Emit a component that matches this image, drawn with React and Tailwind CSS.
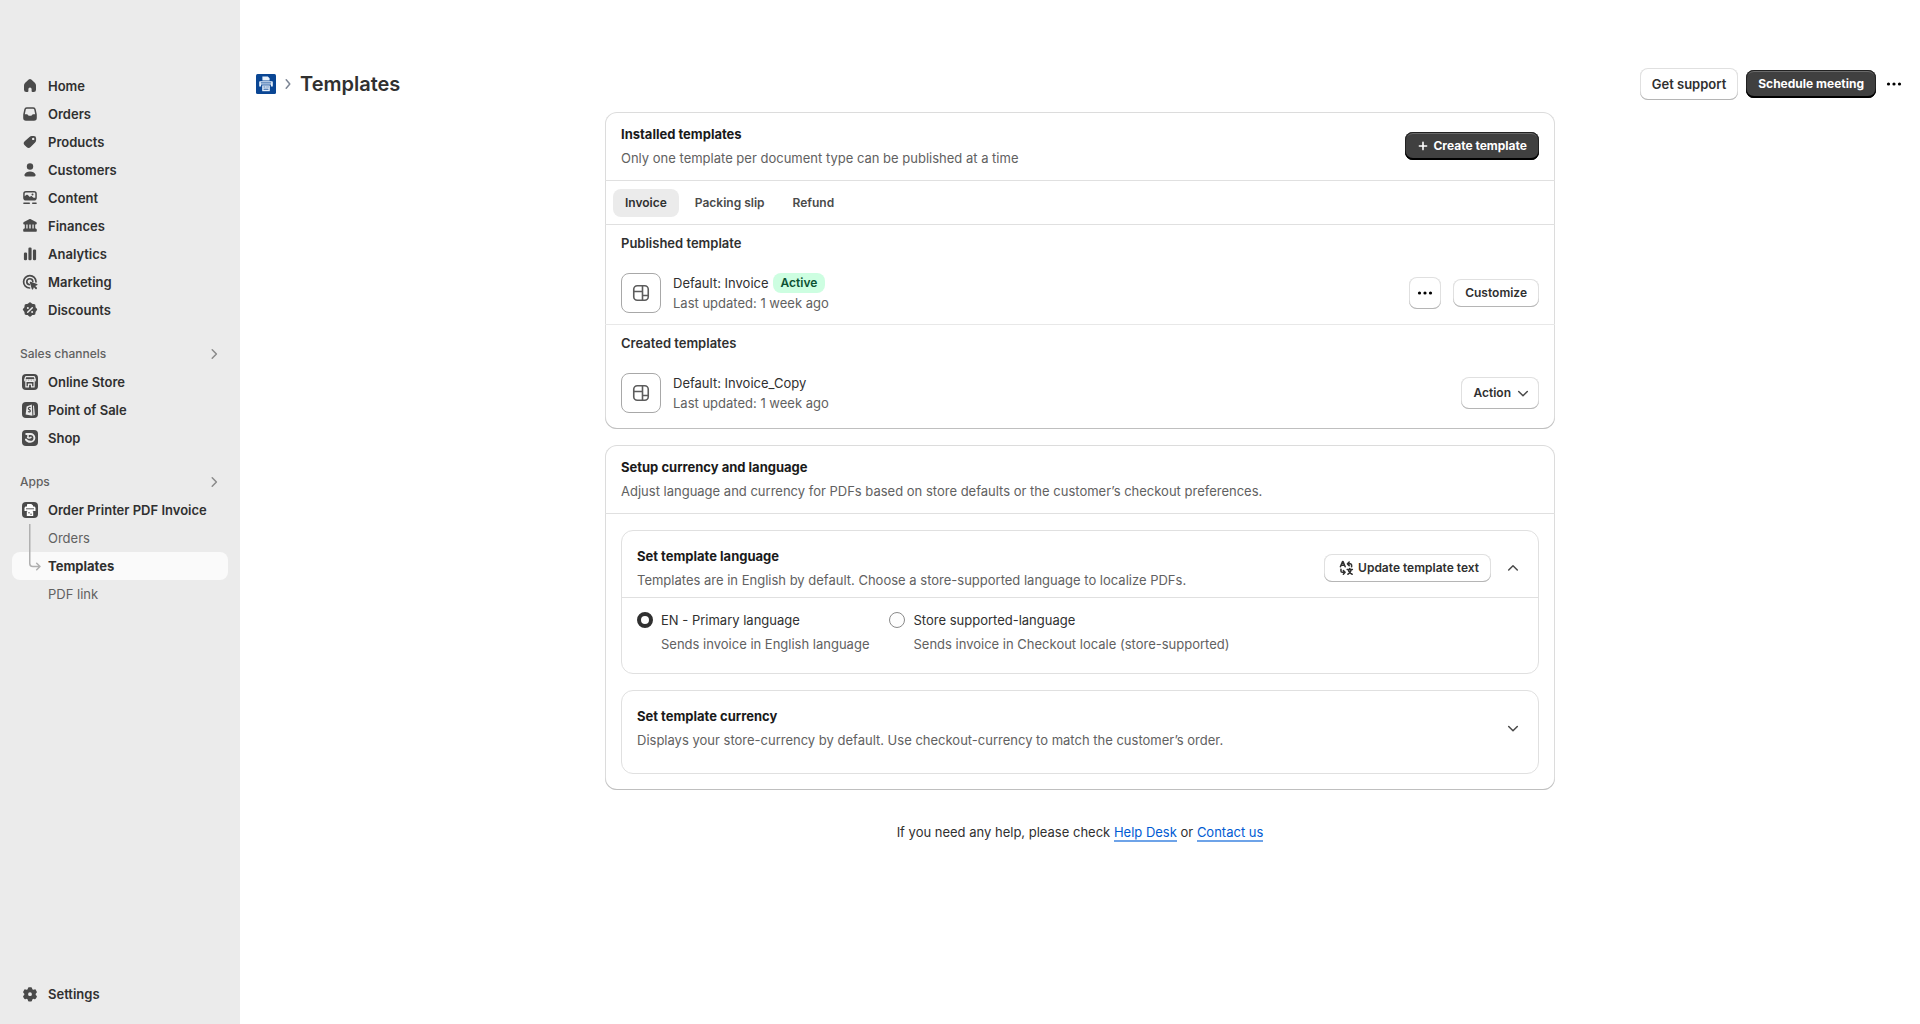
import { useState } from "react";
import clsx from "clsx";

function Icon({ children, className = "size-5" }) {
  return (
    <svg viewBox="0 0 20 20" className={clsx("shrink-0", className)} fill="currentColor" aria-hidden="true">
      {children}
    </svg>
  );
}

const HomeIcon = () => (
  <Icon>
    <path d="M8.7 3.6a2 2 0 0 1 2.6 0l3.5 3.2A3.6 3.6 0 0 1 16 9.500v4.200A2.300 2.300 0 0 1 13.700 16H12.500a.9.9 0 0 1-.9-.9v-2a1.600 1.600 0 0 0-3.200 0v2a.9.9 0 0 1-.9.9H6.300A2.300 2.300 0 0 1 4 13.700V9.500c0-1 .4-2 1.200-2.700Z" />
  </Icon>
);

const OrdersIcon = () => (
  <Icon>
    <path
      fillRule="evenodd"
      d="M6.700 3.200h6.600a2.500 2.500 0 0 1 2.400 2l1 4.800c.1.3.1.5.1.800v3.200a2.800 2.800 0 0 1-2.800 2.800H6a2.800 2.800 0 0 1-2.800-2.800v-3.200c0-.3 0-.5.1-.8l1-4.800a2.500 2.500 0 0 1 2.400-2Zm.2 1.500c-.6 0-1 .3-1.100.8L4.800 10.200h1.900c.5 0 .9.2 1.200.6l.5.700c.1.200.3.300.5.300h2.200c.2 0 .4-.1.500-.3l.5-.7c.3-.4.7-.6 1.200-.6h1.900l-1-4.700c-.1-.5-.5-.8-1.100-.8Z"
    />
  </Icon>
);

const ProductsIcon = () => (
  <Icon>
    <path
      fillRule="evenodd"
      d="M11.800 4h2A2.300 2.300 0 0 1 16.100 6.300v2c0 .9-.4 1.700-1 2.300l-4.500 4.500a2.800 2.800 0 0 1-4 0l-1.900-1.900a2.800 2.800 0 0 1 0-4l4.800-4.300a3.300 3.300 0 0 1 2.300-.9ZM13.200 8.100a1.200 1.200 0 1 0 0-2.400 1.200 1.200 0 0 0 0 2.400Z"
    />
  </Icon>
);

const CustomersIcon = () => (
  <Icon>
    <circle cx="10" cy="6.500" r="3.200" />
    <path d="M4.500 14.600c.9-2 2.900-3.100 5.500-3.100s4.600 1.100 5.500 3.100c.4 1-.3 1.900-1.300 1.900H5.800c-1 0-1.700-.9-1.300-1.900Z" />
  </Icon>
);

const ContentIcon = () => (
  <Icon>
    <path
      fillRule="evenodd"
      d="M6 3h8a2.800 2.800 0 0 1 2.800 2.800v4A2.800 2.800 0 0 1 14 12.600H6a2.800 2.800 0 0 1-2.800-2.800v-4A2.800 2.800 0 0 1 6 3Zm0 1.500c-.7 0-1.300.6-1.300 1.300v2.500l1.500-1.200c.5-.4 1.100-.4 1.600 0l2 1.900.7-.6c.4-.4 1.100-.4 1.500 0l1.600 1.400 1.700-.1v-4C15.300 5 14.700 4.500 14 4.500Zm6.500 3a1 1 0 1 0 0-2 1 1 0 0 0 0 2Z"
    />
    <rect x="3.200" y="14.500" width="6.800" height="1.500" rx=".7" />
    <rect x="12" y="14.500" width="4.800" height="1.500" rx=".7" />
  </Icon>
);

const FinancesIcon = () => (
  <Icon>
    <path d="M9.200 3.300c.5-.3 1.100-.3 1.600 0l5.300 2.800c.5.200.7.600.7 1.100 0 .7-.6 1.300-1.300 1.300h-.3v4h.3c.7 0 1.300.6 1.300 1.300v1.200c0 .4-.3.700-.7.700H3.900a.7.700 0 0 1-.7-.7v-1.200c0-.7.600-1.300 1.300-1.300h.3v-4h-.3c-.7 0-1.300-.6-1.300-1.300 0-.5.300-.9.700-1.100ZM6.300 8.500v4h1.300v-4Zm3 0v4h1.400v-4Zm3.100 0v4h1.300v-4Z" fillRule="evenodd" />
  </Icon>
);

const AnalyticsIcon = () => (
  <Icon>
    <rect x="3.900" y="8.500" width="3.200" height="7.800" rx="1.300" />
    <rect x="8.400" y="3.500" width="3.200" height="12.800" rx="1.300" />
    <rect x="12.900" y="5.500" width="3.200" height="10.800" rx="1.300" />
  </Icon>
);

const MarketingIcon = () => (
  <Icon>
    <g fill="none" stroke="currentColor" strokeWidth="1.700" strokeLinecap="round">
      <path d="M16 9.800A6.200 6.200 0 1 0 9.600 16" />
      <path d="M12.800 9.300A3 3 0 1 0 9.300 12.700" />
    </g>
    <path d="M9.800 10.600c-.2-.6.300-1.100.9-.9l6.300 2.200c.7.200.7 1.200 0 1.400l-1.800.7 1.600 1.600a.8.8 0 0 1 0 1.100l-.2.200a.8.800 0 0 1-1.100 0L13.900 15.300l-.7 1.700c-.2.700-1.200.700-1.400 0Z" />
  </Icon>
);

const DiscountsIcon = () => (
  <Icon>
    <path d="M8.700 3.100a1.700 1.700 0 0 1 2.600 0l.5.500c.3.300.6.400 1 .4h.8a1.800 1.800 0 0 1 1.900 1.900v.8c0 .4.200.7.400 1l.6.500a1.700 1.700 0 0 1 0 2.600l-.6.600c-.2.300-.4.600-.4 1v.7a1.800 1.800 0 0 1-1.900 1.900h-.8c-.4 0-.7.100-1 .4l-.5.500a1.700 1.700 0 0 1-2.600 0l-.5-.5c-.3-.3-.6-.4-1-.4h-.8a1.800 1.800 0 0 1-1.900-1.900v-.7c0-.4-.2-.7-.4-1l-.6-.6a1.700 1.700 0 0 1 0-2.600l.6-.5c.2-.3.400-.6.400-1v-.8A1.800 1.800 0 0 1 6.400 4h.8c.4 0 .7-.1 1-.4Z" />
    <path d="m7.700 12.300 4.600-4.600" stroke="#ebebeb" strokeWidth="1.500" strokeLinecap="round" />
    <circle cx="7.900" cy="7.900" r="1" fill="#ebebeb" />
    <circle cx="12.100" cy="12.100" r="1" fill="#ebebeb" />
  </Icon>
);

const SettingsIcon = () => (
  <Icon>
    <path
      fillRule="evenodd"
      d="M8.900 3.200h2.200c.4 0 .8.300.9.700l.3 1.300 1 .6 1.300-.4c.4-.1.900 0 1.100.4l1.100 1.900c.2.400.1.800-.2 1.100l-.9.900v1.200l.9.900c.3.300.4.700.2 1.100l-1.100 1.900c-.2.400-.7.500-1.100.4l-1.300-.4-1 .6-.3 1.300c-.1.400-.5.700-.9.700H8.900c-.4 0-.8-.3-.9-.7l-.3-1.300-1-.6-1.300.4c-.4.100-.9 0-1.100-.4l-1.100-1.900c-.2-.4-.1-.8.200-1.100l.9-.9V9.700l-.9-.9c-.3-.3-.4-.7-.2-1.100l1.100-1.900c.2-.4.700-.5 1.100-.4l1.300.4 1-.6L8 3.900c.1-.4.500-.7.900-.7ZM10 12.100a1.900 1.900 0 1 0 0-3.800 1.900 1.900 0 0 0 0 3.800Z"
    />
  </Icon>
);

const StoreIcon = () => (
  <Icon>
    <rect x="2" y="2" width="16" height="16" rx="4" />
    <g fill="none" stroke="#ebebeb" strokeWidth="1.200" strokeLinejoin="round">
      <path d="M6.200 4.600h7.600c.3 0 .6.300.7.600l.8 2.600H4.700l.8-2.600c.1-.3.400-.6.700-.6Z" />
      <path d="M4.700 7.800c0 2.200 2.600 2.200 2.650 0 0 2.200 2.600 2.200 2.650 0 0 2.200 2.600 2.200 2.650 0 0 2.200 2.600 2.200 2.650 0" />
      <path d="M5.900 10v4.900h2.600v-2.800h3v2.800h2.600V10" />
    </g>
  </Icon>
);

const PosIcon = () => (
  <Icon>
    <rect x="2" y="2" width="16" height="16" rx="4" />
    <path d="M6.600 6.400 11.800 4.400l.6 11.400-6.800-1.300Z" fill="#ebebeb" />
    <path d="m13 5.300 1 .8.900 8.700-1.500.7Z" fill="#ebebeb" />
    <path d="M10.600 7.600c-1-.5-2.300 0-2.200 1 .1 1 1.900 1 1.900 2.300 0 1-1.200 1.400-2.200.7" fill="none" stroke="currentColor" strokeWidth="1.200" />
  </Icon>
);

const ShopIcon = () => (
  <Icon>
    <rect x="2" y="2" width="16" height="16" rx="4" />
    <path d="M6.200 6h4.300a3.900 3.900 0 0 1 0 7.800c-2.400 0-3.900-1-4.600-2.300" fill="none" stroke="#ebebeb" strokeWidth="1.900" strokeLinecap="round" />
    <path d="M7.600 9.400c1.200.9 2.600.7 3.400-.2M8 6.500v2.700" fill="none" stroke="#ebebeb" strokeWidth="1.500" strokeLinecap="round" />
  </Icon>
);

const PrinterIcon = () => (
  <Icon>
    <rect x="2" y="2" width="16" height="16" rx="4" />
    <g fill="#fff">
      <path d="M7 7.200V5c0-.6.400-1 1-1h3.300L13 5.600v1.600Z" />
      <path d="M6.200 6.600h7.600c1 0 1.700.7 1.700 1.600v2.700h-11V8.200c0-.9.700-1.600 1.700-1.600Z" />
      <path d="M6.800 10.900h6.400V16H6.800Z" />
    </g>
    <path d="M6 8.800h8M6.200 11.300h1M12.800 11.300h1" stroke="currentColor" strokeWidth=".9" />
    <path d="M8.200 12.800h1.600M10.300 14.200h1.500" stroke="currentColor" />
  </Icon>
);

const AppLogo = () => (
  <Icon className="size-5 text-[#0a4694]">
    <rect width="20" height="20" rx="1.500" />
    <g fill="#e8f1fb">
      <path d="M6.400 6.500V2.600h5.400l1.800 1.700v2.200Z" />
      <path d="M4.200 7.200h11.600c.6 0 1 .4 1 1v4.300h-1.900V10.500H5.100v2H3.200V8.200c0-.6.400-1 1-1Z" />
      <path d="M6.200 11.400h7.600v5.800H6.200Z" />
    </g>
    <path d="M4.800 8.900h10.400M7.500 13h1.300M9.600 13h1M11.400 13h1.200M7.500 15.200h5" stroke="currentColor" strokeWidth=".9" />
  </Icon>
);

const Stroke = ({ d, className, width = 1.5 }) => (
  <Icon className={className}>
    <path d={d} fill="none" stroke="currentColor" strokeWidth={width} strokeLinecap="round" strokeLinejoin="round" />
  </Icon>
);

const DotsIcon = () => (
  <Icon className="size-5 text-black">
    <circle cx="4.500" cy="10" r="1.600" />
    <circle cx="10" cy="10" r="1.600" />
    <circle cx="15.500" cy="10" r="1.600" />
  </Icon>
);

const LayoutIcon = () => (
  <Icon className="size-5 text-[#5c5c5c]">
    <g fill="none" stroke="currentColor" strokeWidth="1.600">
      <rect x="2.750" y="2.750" width="14.500" height="14.500" rx="3.500" />
      <path d="M11.500 3v14M3 8.500h8.500M11.500 12.500H17" />
    </g>
  </Icon>
);

const TranslateIcon = () => (
  <Icon className="size-4">
    <g fill="none" stroke="currentColor" strokeWidth="1.900" strokeLinecap="round" strokeLinejoin="round">
      <path d="M3 8.500 5.700 2h.6L9 8.500M4 6.500h4" />
      <path d="M3.700 11.500v2.200c0 1.100.6 1.700 1.700 1.700h3M6.700 13.200l2.200 2.200-2.200 2.300" />
      <path d="M17 8.300V6.500c0-1.100-.6-1.700-1.700-1.700H12M14 2.600l-2.200 2.200L14 7" />
      <path d="M11.500 11.800h6.500M14.700 10.500v1.300M12.300 17.800c2.200-1 3.800-3 4.300-5.800M13 12.300c.5 2.500 2.200 4.500 4.700 5.500" />
    </g>
  </Icon>
);

const mainLinks = [
  { label: "Home", icon: HomeIcon },
  { label: "Orders", icon: OrdersIcon },
  { label: "Products", icon: ProductsIcon },
  { label: "Customers", icon: CustomersIcon },
  { label: "Content", icon: ContentIcon },
  { label: "Finances", icon: FinancesIcon },
  { label: "Analytics", icon: AnalyticsIcon },
  { label: "Marketing", icon: MarketingIcon },
  { label: "Discounts", icon: DiscountsIcon },
];

const channelLinks = [
  { label: "Online Store", icon: StoreIcon },
  { label: "Point of Sale", icon: PosIcon },
  { label: "Shop", icon: ShopIcon },
];

const appLinks = ["Orders", "Templates", "PDF link"];

function NavLink({ label, icon: NavIcon }) {
  return (
    <a href="#" className="flex h-7 items-center gap-2 rounded-lg px-2 font-semibold text-[#303030]">
      <span className="text-[#4a4a4a]">
        <NavIcon />
      </span>
      {label}
    </a>
  );
}

function NavSection({ title, children }) {
  return (
    <div className="mt-4">
      <button type="button" className="flex h-7 w-full items-center justify-between px-2 text-xs font-[550] text-[#616161]">
        {title}
        <Stroke className="size-3 text-[#8a8a8a]" d="m7 3 7 7-7 7" width={2.5} />
      </button>
      {children}
    </div>
  );
}

function Sidebar() {
  return (
    <nav className="flex w-60 shrink-0 flex-col bg-[#ebebeb] px-3 pt-[72px] pb-4">
      {mainLinks.map((link) => (
        <NavLink key={link.label} {...link} />
      ))}

      <NavSection title="Sales channels">
        {channelLinks.map((link) => (
          <NavLink key={link.label} {...link} />
        ))}
      </NavSection>

      <NavSection title="Apps">
        <NavLink label="Order Printer PDF Invoice" icon={PrinterIcon} />
        <div className="relative">
          {appLinks.map((label) => (
            <a
              key={label}
              href="#"
              className={clsx(
                "flex h-7 items-center rounded-lg pl-9",
                label === "Templates" ? "bg-[#fafafa] font-[650] text-[#303030]" : "text-[#616161]"
              )}
            >
              {label}
            </a>
          ))}
          {/* branch line down to the current page */}
          <svg viewBox="0 0 14 50" className="absolute top-0 left-4 h-[50px] w-3.5 text-[#b0b0b0]" fill="none" stroke="currentColor" strokeWidth="1.500" strokeLinecap="round" strokeLinejoin="round">
            <path d="M1.750 0v39.500a3 3 0 0 0 3 3H12M8.700 39.200l3.300 3.300-3.300 3.300" />
          </svg>
        </div>
      </NavSection>

      <div className="mt-auto">
        <NavLink label="Settings" icon={SettingsIcon} />
      </div>
    </nav>
  );
}

function Button({ children, primary, className, ...props }) {
  return (
    <button
      type="button"
      className={clsx(
        "flex items-center justify-center rounded-lg",
        primary
          ? "h-7 bg-[#404040] text-xs font-[650] text-white shadow-[inset_0_-2px_0_#000,inset_0_0_0_1px_#222,inset_0_2px_0_#6a6a6a]"
          : "bg-white font-semibold text-[#303030] shadow-[inset_0_-1px_0_#b5b5b5,inset_0_0_0_1px_#e0e0e0]",
        className
      )}
      {...props}
    >
      {children}
    </button>
  );
}

function Card({ title, subtitle, action, children }) {
  return (
    <section className="rounded-xl bg-white shadow-[inset_0_-1px_0_#bfbfbf,inset_0_0_0_1px_#dcdcdc]">
      <div className="flex items-center justify-between border-b border-[#e0e0e0] px-4 py-3">
        <div className="flex flex-col gap-1">
          <h2 className="font-[650]">{title}</h2>
          <p className="text-[#616161]">{subtitle}</p>
        </div>
        {action}
      </div>
      {children}
    </section>
  );
}

function TemplateRow({ name, active, children }) {
  return (
    <div className="mt-5 flex items-center justify-between">
      <div className="flex items-center gap-3">
        <div className="flex size-10 items-center justify-center rounded-lg border border-[#a8a8a8]">
          <LayoutIcon />
        </div>
        <div>
          <p className="flex items-center gap-1 text-[#303030]">
            {name}
            {active && (
              <span className="rounded-lg bg-[#cdfee1] px-2 text-xs leading-5 font-semibold text-[#0c5132]">Active</span>
            )}
          </p>
          <p className="text-[#616161]">Last updated: 1 week ago</p>
        </div>
      </div>
      <div className="flex items-center gap-3">{children}</div>
    </div>
  );
}

function LanguageOption({ value, label, help, checked, onChange }) {
  return (
    <div className="flex gap-2">
      <input
        type="radio"
        id={value}
        name="language"
        value={value}
        checked={checked}
        onChange={() => onChange(value)}
        className="mt-0.5 size-4 shrink-0 appearance-none rounded-full border border-[#8a8a8a] bg-[#fdfdfd] checked:border-4 checked:border-[#303030]"
      />
      <div className="flex flex-col gap-1">
        <label htmlFor={value} className="text-[#303030]">
          {label}
        </label>
        <p className="text-[#616161]">{help}</p>
      </div>
    </div>
  );
}

const tabs = ["Invoice", "Packing slip", "Refund"];

export default function App() {
  const [tab, setTab] = useState("Invoice");
  const [language, setLanguage] = useState("primary");

  return (
    <div className="flex min-h-screen bg-white font-['Inter',sans-serif] text-[13px] leading-5 font-normal text-[#1a1a1a] antialiased">
      <Sidebar />

      <main className="min-w-0 flex-1">
        <header className="flex items-center justify-between px-4 pt-[68px]">
          <div className="flex items-center">
            <AppLogo />
            <Stroke className="mx-1.5 size-3 text-[#7c8594]" d="m7 3 6 7-6 7" width={2.5} />
            <h1 className="text-xl font-semibold text-[#303030]">Templates</h1>
          </div>
          <div className="flex items-center gap-2">
            <Button className="h-8 px-3">Get support</Button>
            <Button primary className="px-3">
              Schedule meeting
            </Button>
            <button type="button" aria-label="More actions">
              <DotsIcon />
            </button>
          </div>
        </header>

        <div className="mx-auto mt-3 flex max-w-[950px] flex-col gap-4">
          <Card
            title="Installed templates"
            subtitle="Only one template per document type can be published at a time"
            action={
              <Button primary className="gap-0.5 pr-3 pl-2.5">
                <Stroke className="size-4" d="M10 5.500v9M5.500 10h9" width={2} />
                Create template
              </Button>
            }
          >
            <div role="tablist" className="flex h-11 items-center gap-1 border-b border-[#e0e0e0] px-2">
              {tabs.map((name) => (
                <button
                  key={name}
                  type="button"
                  role="tab"
                  aria-selected={tab === name}
                  onClick={() => setTab(name)}
                  className={clsx(
                    "h-7 rounded-lg px-3 text-xs font-semibold",
                    tab === name ? "bg-[#ebebeb] text-[#303030]" : "text-[#4a4a4a]"
                  )}
                >
                  {name}
                </button>
              ))}
            </div>

            <div className="border-b border-[#e8e8e8] px-4 pt-2 pb-[11px]">
              <h3 className="font-semibold text-[#303030]">Published template</h3>
              <TemplateRow name="Default: Invoice" active>
                <Button className="size-8" aria-label="Template actions">
                  <DotsIcon />
                </Button>
                <Button className="h-7 px-3 text-xs">Customize</Button>
              </TemplateRow>
            </div>

            <div className="px-4 pt-2 pb-4">
              <h3 className="font-semibold text-[#303030]">Created templates</h3>
              <TemplateRow name="Default: Invoice_Copy">
                <Button className="h-8 gap-0.5 pr-1.5 pl-3 text-xs">
                  Action
                  <Stroke className="size-5 text-[#4a4a4a]" d="m5.700 8.500 4.300 4.300 4.300-4.300" />
                </Button>
              </TemplateRow>
            </div>
          </Card>

          <Card
            title="Setup currency and language"
            subtitle="Adjust language and currency for PDFs based on store defaults or the customer’s checkout preferences."
          >
            <div className="flex flex-col gap-4 p-4">
              <div className="rounded-xl border border-[#e0e0e0]">
                <div className="flex items-center justify-between border-b border-[#e0e0e0] px-[15px] pt-[15px] pb-[7px]">
                  <div className="flex flex-col gap-1">
                    <h3 className="font-[650]">Set template language</h3>
                    <p className="text-[#616161]">
                      Templates are in English by default. Choose a store-supported language to localize PDFs.
                    </p>
                  </div>
                  <div className="flex items-center gap-3">
                    <Button className="h-7 gap-1 pr-3 pl-3.5 text-xs">
                      <TranslateIcon />
                      Update template text
                    </Button>
                    <button type="button" aria-label="Collapse language settings">
                      <Stroke className="size-5 text-[#4a4a4a]" d="m5.700 12 4.300-4.300 4.300 4.300" />
                    </button>
                  </div>
                </div>
                <div className="flex gap-5 px-[15px] pt-3 pb-[19px]">
                  <LanguageOption
                    value="primary"
                    label="EN - Primary language"
                    help="Sends invoice in English language"
                    checked={language === "primary"}
                    onChange={setLanguage}
                  />
                  <LanguageOption
                    value="store"
                    label="Store supported-language"
                    help="Sends invoice in Checkout locale (store-supported)"
                    checked={language === "store"}
                    onChange={setLanguage}
                  />
                </div>
              </div>

              <div className="flex items-center justify-between rounded-xl border border-[#e0e0e0] px-[15px] pt-[15px] pb-[23px]">
                <div className="flex flex-col gap-1">
                  <h3 className="font-[650]">Set template currency</h3>
                  <p className="text-[#616161]">
                    Displays your store-currency by default. Use checkout-currency to match the customer’s order.
                  </p>
                </div>
                <button type="button" aria-label="Expand currency settings">
                  <Stroke className="size-5 text-[#4a4a4a]" d="m5.700 8.500 4.300 4.300 4.300-4.300" />
                </button>
              </div>
            </div>
          </Card>

          <p className="mt-4 text-center text-[#303030]">
            If you need any help, please check{" "}
            <a href="#" className="border-b-2 border-[#6ea3e8] text-[#005bd3]">
              Help Desk
            </a>{" "}
            or{" "}
            <a href="#" className="border-b-2 border-[#6ea3e8] text-[#005bd3]">
              Contact us
            </a>
          </p>
        </div>
      </main>
    </div>
  );
}
